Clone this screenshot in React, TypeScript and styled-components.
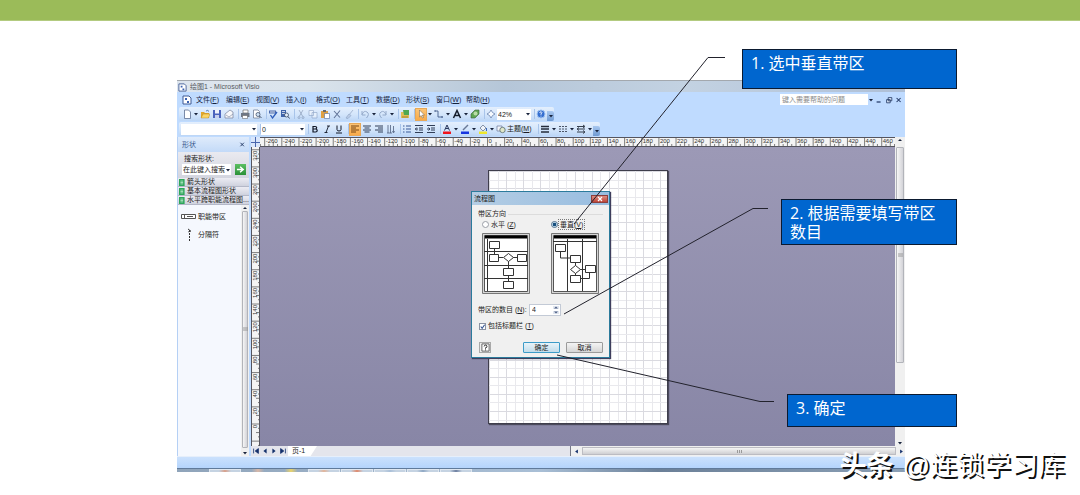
import React from "react";
import styled, { createGlobalStyle, css } from "styled-components";

const GlobalStyle = createGlobalStyle`
  *, *::before, *::after { box-sizing: border-box; }
  body {
    margin: 0;
    background: #fff;
    color: #1c1c22;
    font-family: "Liberation Sans", "Noto Sans CJK SC", sans-serif;
    font-size: 7px;
    line-height: 10px;
  }
  button, input, select { font: inherit; color: inherit; margin: 0; padding: 0; border: 0; background: none; border-radius: 0; }
  svg { display: block; flex: none; }
`;

/* ---------- slide ---------- */

const Slide = styled.main`
  position: relative;
  min-height: 100vh;
  overflow: hidden;
`;

const Banner = styled.div`
  height: 21px;
  background: #9bbb59;
  border-bottom: 1px solid #b3cb80;
`;

const AppWindow = styled.section`
  position: relative;
  margin: 59px 175px 0 177px;
  background: #bfdbff;
`;

const TitleBar = styled.header`
  display: flex;
  align-items: center;
  gap: 3px;
  height: 12px;
  padding: 1px 2px 0 1px;
  border-top: 1px solid #a3a8ae;
  background: linear-gradient(90deg, #dde5ee 0, #dbe4ec 18%, #b5c6d8 45%, #c3d2e2 70%, #aebfd6 100%);
  color: #55585f;
  h1 { margin: 0; font: inherit; }
`;

const MenuBar = styled.nav`
  display: flex;
  align-items: center;
  height: 15px;
  padding: 0 1px 0 5px;
`;

const MenuList = styled.div`
  display: flex;
  gap: 8px;
  margin-left: 4px;
  flex: 1;
  white-space: nowrap;
`;

const MenuItem = styled.button`
  width: 22px;
  line-height: 10px;
  white-space: nowrap;
  text-align: left;
  color: #15223c;
`;

const HelpSearch = styled.input`
  width: 88px;
  height: 11px;
  padding: 0 2px;
  background: #fff;
  &::placeholder { color: #8b8b8b; opacity: 1; }
`;

const WindowButtons = styled.div`
  display: flex;
  align-items: center;
`;

const WindowButton = styled.button`
  width: 10px;
  height: 10px;
  display: grid;
  place-items: center;
`;

const ToolRow = styled.div`
  display: flex;
  height: 15px;
  padding-left: 2px;
`;

const Toolbar = styled.div`
  display: flex;
  align-items: center;
  height: 14px;
  padding-left: 2px;
  border-radius: 2px;
  background: linear-gradient(#e4effd, #d3e5fb 55%, #bcd6f6);
`;

const ToolButton = styled.button<{ $active?: boolean; $dim?: boolean }>`
  display: grid;
  place-items: center;
  width: 12px;
  height: 13px;
  ${(p) => p.$active && css`background: linear-gradient(#fbc67a, #f8a845); outline: 1px solid #e8a857; outline-offset: -1px;`}
  svg { opacity: ${(p) => (p.$dim ? 0.45 : 1)}; }
`;

const CaretButton = styled.button`
  display: grid;
  place-items: center;
  width: 6px;
  height: 13px;
`;

const Divider = styled.span`
  width: 4px;
  height: 10px;
  border-right: 1px solid #a8c4ea;
`;

const Overflow = styled.button`
  align-self: flex-end;
  display: grid;
  place-items: center;
  width: 7px;
  height: 10px;
  border-radius: 0 2px 2px 0;
  background: linear-gradient(#a9c8f0, #6f9ad2);
`;

const Combo = styled.label<{ $w: number }>`
  display: flex;
  align-items: center;
  width: ${(p) => p.$w}px;
  height: 11px;
  background: #fff;
  select, input { flex: 1; min-width: 0; height: 11px; padding-left: 1px; appearance: none; outline: none; line-height: 11px; }
`;

const ThemeButton = styled.button`
  display: flex;
  align-items: center;
  width: 40px;
  white-space: nowrap;
  gap: 1px;
  padding-left: 1px;
`;

/* ---------- shapes panel ---------- */

const Body = styled.div`
  display: flex;
`;

const SidePanel = styled.aside`
  display: flex;
  flex-direction: column;
  width: 72px;
  margin-right: 2px;
  border-left: 1px solid #b5d0f5;
  background: #f5f8fe;
`;

const PanelHeader = styled.div`
  display: flex;
  justify-content: space-between;
  align-items: center;
  height: 15px;
  padding: 0 3px 0 4px;
  background: linear-gradient(#dfebfb, #c3daf8);
  color: #38568c;
  h2 { margin: 0; font: inherit; }
`;

const SearchBox = styled.div`
  height: 26px;
  padding: 2px 3px 0 4px;
  background: linear-gradient(#eaeaf0, #d3d5df);
`;

const SearchLabel = styled.label`
  display: block;
  padding-left: 2px;
  height: 10px;
`;

const SearchRow = styled.div`
  display: flex;
  justify-content: space-between;
`;

const GoButton = styled.button`
  display: grid;
  place-items: center;
  width: 11px;
  height: 11px;
  background: linear-gradient(#5cbf62, #2a9037);
`;

const Stencil = styled.button`
  display: flex;
  align-items: center;
  gap: 1px;
  height: 9px;
  padding-left: 1px;
  border-bottom: 1px solid #b4b8c8;
  background: linear-gradient(#ececf3, #cfd2de);
  white-space: nowrap;
`;

const ShapesArea = styled.div`
  display: flex;
  flex: 1;
`;

const ShapeList = styled.ul`
  flex: 1;
  margin: 0;
  padding: 6px 0 0 3px;
  list-style: none;
`;

const ShapeItem = styled.li`
  display: flex;
  align-items: center;
  gap: 2px;
  height: 18px;
  padding-bottom: 6px;
  white-space: nowrap;
  svg { overflow: visible; }
`;

const ScrollTrack = styled.div<{ $w: number }>`
  display: flex;
  flex-direction: column;
  align-items: center;
  width: ${(p) => p.$w}px;
  background: #f0f0f0;
`;

const ScrollThumb = styled.div<{ $end: number }>`
  flex: 1;
  display: grid;
  place-items: center;
  align-self: stretch;
  margin: 0 1px ${(p) => p.$end}px;
  border: 1px solid #b2b4ba;
  border-radius: 1px;
  background: linear-gradient(90deg, #f6f6f6, #d3d3d8);
`;

/* ---------- drawing area ---------- */

const Workspace = styled.div`
  flex: 1;
  min-width: 0;
  display: grid;
  grid-template-columns: 9px 1fr 10px;
  grid-template-rows: 10px auto 10px;
`;

const RulerStrip = styled.div`
  overflow: hidden;
  min-width: 0;
  min-height: 0;
  background: #f4f4f4;
`;

const Canvas = styled.div`
  display: flex;
  justify-content: center;
  padding: 23px 0 22px;
  background: linear-gradient(#9c99b6, #8886a6);
`;

const Paper = styled.div`
  width: 180px;
  height: 254px;
  background: #fff;
  border: 1px solid #3f3e4c;
  box-shadow: 1px 1px 1px #4b4a5c;
  overflow: hidden;
`;

const SheetBar = styled.div`
  grid-column: 1 / -1;
  display: flex;
  align-items: center;
  background: #e4e5ec;
`;

const NavButton = styled.button`
  width: 9px;
  height: 10px;
  display: grid;
  place-items: center;
`;

const SheetTab = styled.button`
  width: 29px;
  height: 10px;
  margin-left: 1px;
  padding-left: 4px;
  text-align: left;
  background: #fff;
  clip-path: polygon(0 0, 100% 0, 78% 100%, 0 100%);
`;

const SheetGap = styled.div`
  flex: 1;
  height: 10px;
  border-right: 1px solid #777a88;
`;

const HorizontalScroll = styled.div`
  display: flex;
  align-items: center;
  width: 51%;
  height: 10px;
  padding-left: 2px;
  background: #f0f0f0;
`;

const HorizontalThumb = styled.div`
  flex: 1;
  display: grid;
  place-items: center;
  height: 8px;
  margin: 0 2px;
  border: 1px solid #bcbcc2;
  background: linear-gradient(#f5f5f5, #cfcfd2);
`;

const StatusBar = styled.footer`
  height: 12px;
  border-top: 1px solid #e6effb;
  background: linear-gradient(#cbe1fd, #b4d4fc);
`;

const TaskBar = styled.div`
  display: flex;
  gap: 1px;
  height: 4px;
  padding-left: 32px;
  border-top: 1px solid #607a9a;
  background: linear-gradient(90deg, #8fa4ba, #a9bfd6 50%, #6b8098 66%, #8ba0b6 100%);
`;

const Task = styled.span<{ $tone: string; $plain?: boolean }>`
  width: 32px;
  border: ${(p) => (p.$plain ? "0" : "1px solid #dfe7f0")};
  border-bottom: 0;
  background: linear-gradient(90deg, transparent 30%, ${(p) => p.$tone} 50%, transparent 70%), ${(p) => (p.$plain ? "none" : "#c5d3e2")};
`;

/* ---------- dialog ---------- */

const Dialog = styled.div`
  position: absolute;
  top: 111px;
  left: 50%;
  width: 139px;
  margin-left: -70px;
  border: 1px solid #2b7b9c;
  background: #f0f0f0;
  box-shadow: 1px 1px 1px #3f3e5c;
`;

const DialogTitle = styled.div`
  display: flex;
  justify-content: space-between;
  align-items: center;
  height: 13px;
  padding: 0 1px 0 2px;
  background: linear-gradient(90deg, #b4cde4, #98bde0);
  h2 { margin: 0; font: inherit; }
`;

const CloseButton = styled.button`
  display: grid;
  place-items: center;
  width: 17px;
  height: 8px;
  border: 1px solid #8c3f3c;
  background: linear-gradient(#dd8c81, #bd4538);
`;

const DialogBody = styled.form`
  display: flex;
  flex-direction: column;
  height: 152px;
  padding: 4px 6px 0;
`;

const Group = styled.fieldset`
  margin: 0;
  padding: 0;
  border: 0;
  min-width: 0;
`;

const Legend = styled.legend`
  display: flex;
  align-items: center;
  gap: 2px;
  width: 100%;
  padding: 0;
  &::after { content: ""; flex: 1; height: 1px; background: #dcdcdc; }
`;

const Choices = styled.div`
  display: grid;
  grid-template-columns: 69px auto;
  padding-left: 4px;
`;

const ChoiceLabel = styled.label<{ $focus?: boolean }>`
  display: flex;
  align-items: center;
  gap: 1px;
  height: 11px;
  margin-bottom: 3px;
  white-space: nowrap;
  span { outline: ${(p) => (p.$focus ? "1px dotted #777" : "0")}; padding: 0 1px; line-height: 9px; }
`;

const Radio = styled.input`
  appearance: none;
  width: 7px;
  height: 7px;
  border: 1px solid #9a9ea6;
  border-radius: 50%;
  background: #fff;
  &:checked { border-color: #51708c; background: radial-gradient(#174f7e 45%, #d5ebf7 60%); }
`;

const TickBox = styled.span`
  display: grid;
  width: 7px;
  height: 7px;
  input { grid-area: 1 / 1; appearance: none; width: 7px; height: 7px; border: 1px solid #8b93a3; background: #fff; }
  svg { grid-area: 1 / 1; visibility: hidden; pointer-events: none; z-index: 1; }
  input:checked + svg { visibility: visible; }
`;

const CountRow = styled.div`
  display: flex;
  align-items: center;
  height: 12px;
  margin-top: 10px;
  label { width: 51px; white-space: nowrap; }
`;

const Spinner = styled.div`
  display: flex;
  width: 32px;
  height: 12px;
  border: 1px solid #c3cad6;
  background: #fff;
  input { width: 22px; padding-left: 2px; }
`;

const SpinButtons = styled.div`
  display: grid;
  flex: 1;
  button { display: grid; place-items: center; background: #dfe5ef; outline: 1px solid #fff; outline-offset: -1px; }
`;

const TickLabel = styled.label`
  display: flex;
  align-items: center;
  gap: 2px;
  height: 10px;
  margin-top: 5px;
  padding-left: 1px;
`;

const DialogButtons = styled.div`
  display: flex;
  gap: 6px;
  margin-top: 11px;
`;

const HelpButton = styled.button`
  display: grid;
  place-items: center;
  width: 12px;
  height: 11px;
  margin: 0 auto 0 1px;
  border: 1px solid #a9a9a9;
  background: #eee;
`;

const PushButton = styled.button<{ $primary?: boolean }>`
  width: 37px;
  height: 11px;
  border: 1px solid ${(p) => (p.$primary ? "#3c9bc8" : "#9b9b9b")};
  border-radius: 1px;
  background: ${(p) => (p.$primary ? "linear-gradient(#e8f3f9, #c2dcea)" : "linear-gradient(#f4f4f4, #d6d6d6)")};
  line-height: 9px;
`;

/* ---------- annotations ---------- */

const Leaders = styled.svg`
  position: absolute;
  top: 0;
  left: 50%;
  overflow: visible;
  pointer-events: none;
`;

const Callout = styled.p<{ $top: number; $w: number; $h: number }>`
  position: absolute;
  top: ${(p) => p.$top}px;
  left: calc(50% + ${(p) => 417 - p.$w}px);
  width: ${(p) => p.$w}px;
  min-height: ${(p) => p.$h}px;
  margin: 0;
  padding: 4px 8px 2px;
  border: 1px solid #0b1a30;
  background: #0066cf;
  color: #fff;
  font: 400 16px/19px "Open Sans", "Noto Sans CJK SC", sans-serif;
`;

const Watermark = styled.p`
  position: absolute;
  top: 448px;
  right: 15px;
  display: flex;
  gap: 9px;
  margin: 0;
  color: #fff;
  font: 400 27px/36px "Liberation Sans", "Noto Sans CJK SC", sans-serif;
  text-shadow: 2px 2px 0 #111;
  white-space: nowrap;
  strong { font-weight: 700; }
`;

/* ---------- icons ---------- */

const art: Record<string, React.ReactNode> = {
  visio: <><path d="M1 1h6l2 2v6H1z" fill="#fff" stroke="#3f5b95" /><path d="M3 3h2v2H3zM5 6h2v2H5z" fill="#3b61b0" /></>,
  fresh: <path d="M2.500 1h4l2 2v6.500h-6z" fill="#fff" stroke="#5d6f92" strokeWidth=".8" />,
  open: <><path d="M1 3h3l1 1h4v5H1z" fill="#e2a72d" /><path d="M1 9l2-4h7L8.500 9z" fill="#fbd568" stroke="#a97715" strokeWidth=".4" /><path d="M6 2q2-1.500 3 .5" stroke="#3764ad" fill="none" strokeWidth=".8" /></>,
  save: <><path d="M1 1h8v8H1z" fill="#4a63bd" /><path d="M3 1h4v3.500H3z" fill="#eef2fb" /><path d="M3 6h4v3H3z" fill="#c7d0ec" /></>,
  mail: <><path d="M1 5l5-4 3 2v6H1z" fill="#f8f8fa" stroke="#74809b" strokeWidth=".7" /><path d="M2 6l3 2 4-3" stroke="#74809b" fill="none" strokeWidth=".6" /></>,
  print: <><path d="M3 1h5v3H3z" fill="#fff" stroke="#555" strokeWidth=".6" /><path d="M1 4h8.500v4H1z" fill="#6d7684" /><path d="M2.500 6.500h5V9.500h-5z" fill="#fff" stroke="#555" strokeWidth=".5" /></>,
  preview: <><path d="M1.500 1H6l1.500 1.500V9h-6z" fill="#fff" stroke="#66738b" strokeWidth=".7" /><circle cx="6" cy="5.500" r="2" fill="#cfe2f5" stroke="#47566f" strokeWidth=".8" /><path d="M7.500 7L9.500 9" stroke="#47566f" /></>,
  spell: <><path d="M1 1.500h7v3H1z" fill="#4c6bab" /><path d="M2 3h5" stroke="#fff" strokeWidth=".8" /><path d="M2.500 6l2 3L9 3" stroke="#2f5dba" fill="none" strokeWidth="1.300" /></>,
  research: <><path d="M1 1h5v7H1z" fill="#3f63a9" /><path d="M2 2.500h3M2 4.500h3" stroke="#fff" strokeWidth=".7" /><circle cx="6.500" cy="6" r="2" fill="#e4effb" stroke="#3e4c66" strokeWidth=".8" /><path d="M8 7.500l1.500 2" stroke="#3e4c66" /></>,
  cut: <path d="M3 1l3.500 6M7 1L3.500 7M2 8.500a1 1 0 1 0 2 0 1 1 0 1 0-2 0M6 8.500a1 1 0 1 0 2 0 1 1 0 1 0-2 0" stroke="#45577a" fill="none" strokeWidth=".8" />,
  copy: <path d="M1 1.500h4.500v5H1zM4 3.500h5v5.500H4z" fill="#fff" stroke="#4b6695" strokeWidth=".7" />,
  paste: <><path d="M1 2h7v7H1z" fill="#dfa042" /><path d="M3 1h3v2H3z" fill="#66696f" /><path d="M4.500 4.500h5v5h-5z" fill="#fff" stroke="#536ba0" strokeWidth=".6" /></>,
  erase: <path d="M2 2l6 6.500M8 1.500L2 9" stroke="#63769a" fill="none" strokeWidth="1.100" />,
  brush: <path d="M9 1L5 6M5 5l2 1.500-3 3-2-.5z" stroke="#6b7fa5" fill="#a7b5d0" />,
  undo: <path d="M2 5.500Q4 1 7 3t-.5 6M2 2v4h3.500" stroke="#47618f" fill="none" />,
  redo: <path d="M8 5.500Q6 1 3 3t.5 6M8 2v4H4.500" stroke="#47618f" fill="none" />,
  shapes: <><path d="M1 3h8v6H1z" fill="#e0bd55" /><path d="M3 1h6v5H4z" fill="#4da852" /><path d="M2 8h6" stroke="#8a6a17" strokeWidth=".7" /></>,
  pointer: <path d="M3.500 1v7l1.700-1.500L6.500 9l1-.5-1.200-2.400H8.500z" fill="#fff" stroke="#665b4e" strokeWidth=".5" />,
  connector: <path d="M1 2h3v6h5M1 1v2M8 7v2" stroke="#465e8b" fill="none" strokeWidth=".9" />,
  letter: <path d="M1.500 9L5 1.500 8.500 9M3 6.500h4" stroke="#151c2b" fill="none" strokeWidth="1.500" />,
  stamp: <><path d="M1 5l4-4h4v4L5 9H1z" fill="#5fa654" stroke="#3a5e3c" strokeWidth=".6" /><circle cx="5.500" cy="4.500" r="2" fill="#b9dba7" /></>,
  pan: <path d="M5 1l1.500 2.500L9 5 6.500 6.500 5 9 3.500 6.500 1 5l2.500-1.500z" fill="#f6faff" stroke="#6a83ad" strokeWidth=".8" />,
  help: <><circle cx="5" cy="5" r="4" fill="#356fd0" stroke="#9fc3f3" /><path d="M3.700 4Q4 2.500 5.300 2.800T5 5v.8M5 6.700v.8" stroke="#fff" fill="none" strokeWidth=".9" /></>,
  bold: <path d="M3 2.500v5.500h2.500q1.700 0 1.700-1.500T5.500 5H3h2.200q1.500 0 1.500-1.200T5.200 2.500z" stroke="#101626" fill="none" strokeWidth="1.200" />,
  italic: <path d="M6.500 2L4 8.500M5 2h3M2.500 8.500h3" stroke="#101626" fill="none" strokeWidth=".9" />,
  underline: <path d="M3 1.500v4q0 1.500 2 1.500t2-1.500v-4M2 9h6" stroke="#101626" fill="none" />,
  left: <path d="M1 2h8M1 4h5M1 6h8M1 8h5" stroke="#7b4713" />,
  center: <path d="M1 2h8M2.500 4h5M1 6h8M2.500 8h5" stroke="#313e58" />,
  right: <path d="M1 2h8M4 4h5M1 6h8M4 8h5" stroke="#313e58" />,
  vertical: <path d="M2 1v8M4.500 1v8M7.500 2v6M6.500 7l1 2 1-2M1 9h5" stroke="#51617f" fill="none" strokeWidth=".8" />,
  bullets: <path d="M1 2h1.500M1 5h1.500M1 8h1.500M4 2h5M4 5h5M4 8h5" stroke="#3a5b98" />,
  outdent: <path d="M1 1.500h8M5 4h4M5 6h4M1 8.500h8M4 5H1.500M2.800 3.500L1.300 5l1.500 1.500" stroke="#313e58" fill="none" />,
  indent: <path d="M1 1.500h8M5 4h4M5 6h4M1 8.500h8M1 5h3M2.500 3.500L4 5 2.500 6.500" stroke="#313e58" fill="none" />,
  fontColor: <><path d="M2.500 6.500L5 1l2.500 5.500M3.500 4.500h3" stroke="#26345a" fill="none" /><path d="M1 7.500h8v2.500H1z" fill="#f0141e" /></>,
  lineColor: <><path d="M3 6l5-5" stroke="#697996" strokeWidth="1.400" /><path d="M1 7.500h8v2.500H1z" fill="#1635e0" /></>,
  fillColor: <><path d="M2 4l3-3 3 3-3 3z" fill="#eef3fa" stroke="#5d6c84" strokeWidth=".7" /><path d="M8.500 4v3" stroke="#3a69b8" /><path d="M1 7.500h8v2.500H1z" fill="#efe72c" /></>,
  theme: <><path d="M1 2h5v5H1z" fill="#f3f5fa" stroke="#68779a" strokeWidth=".7" /><circle cx="6.500" cy="6" r="2.700" fill="#dfe7c9" stroke="#596d70" strokeWidth=".8" /></>,
  weight: <path d="M1 2.500h8M1 5h8M1 8h8" stroke="#252c3b" strokeWidth="1.700" />,
  dashes: <path d="M1 2.500h8M1 5h8M1 7.500h8" stroke="#4c5669" strokeDasharray="2 1" />,
  ends: <path d="M1 2.500h7M2 5h7M1 8h7M7 1l2 1.500L7 4M3 3.500L1 5l2 1.500M7 6.500L9 8 7 9.500" stroke="#252c3b" fill="none" strokeWidth=".9" />,
  go: <path d="M1 5h6M4.500 2L8 5 4.500 8" stroke="#fff" fill="none" strokeWidth="1.600" />,
  stencil: <><path d="M0 0h8v10H0z" fill="#2ea65a" /><path d="M2 3h4M2 5h4M2 7h4" stroke="#d2f3dc" /></>,
  cross: <path d="M2 2.500l5 5M7 2.500l-5 5" stroke="#1e3360" strokeWidth="1.300" />,
  minus: <path d="M2 7.500h5" stroke="#1e3360" strokeWidth="1.500" />,
  restore: <path d="M4 2h4.500v4H4zM2 4.500h4.500v4H2z" fill="#dce9fb" stroke="#1e3360" />,
  question: <><path d="M1 1h8v8H1z" fill="#fff" stroke="#333" strokeWidth=".8" /><path d="M3.500 3.800q.2-1.500 1.600-1.500T6.600 3.800 5 5.300v1M5 7.200v1" stroke="#111" fill="none" /></>,
  tick: <path d="M2.500 5l2 2.500L8 2.500" stroke="#33528f" fill="none" strokeWidth="1.500" />,
  first: <path d="M2 2v6M8 2L4 5l4 3z" stroke="#14306b" fill="#14306b" />,
  prev: <path d="M7 2L3 5l4 3z" fill="#14306b" />,
  next: <path d="M3 2l4 3-4 3z" fill="#14306b" />,
  last: <path d="M8 2v6M2 2l4 3-4 3z" stroke="#14306b" fill="#14306b" />,
};

const Icon = ({ name, size = 9 }: { name: string; size?: number }) => (
  <svg width={size} height={size} viewBox="0 0 10 10" aria-hidden="true">{art[name]}</svg>
);

const Caret = ({ up = false }: { up?: boolean }) => (
  <svg width="6" height="6" viewBox="0 0 6 6" aria-hidden="true">
    <path d={up ? "M1 4h4L3 2z" : "M1 2h4L3 4.500z"} fill="#18233c" />
  </svg>
);

const Grip = ({ vertical = false }: { vertical?: boolean }) => (
  <svg width="5" height="5" viewBox="0 0 5 5" aria-hidden="true">
    <path d={vertical ? "M0 1h5M0 3h5" : "M.5 1v3M2.500 1v3M4.500 1v3"} stroke="#888" strokeWidth=".8" />
  </svg>
);

const Key = ({ text, k }: { text: string; k: string }) => <>{text}(<u>{k}</u>)</>;

/* ---------- toolbars ---------- */

const dimmed = new Set(["cut", "copy", "brush", "undo", "redo"]);
const pressed = new Set(["pointer", "left"]);

/* "|" is a divider and "v" a drop-down arrow; everything else is an icon name. */
const Tools = ({ items }: { items: string }) => (
  <>
    {items.split(" ").map((item, i) => {
      if (item === "|") return <Divider key={i} />;
      if (item === "v") return <CaretButton key={i} type="button" aria-label="更多选项"><Caret /></CaretButton>;
      return (
        <ToolButton key={i} type="button" aria-label={item} $active={pressed.has(item)} $dim={dimmed.has(item)}>
          <Icon name={item} size={10} />
        </ToolButton>
      );
    })}
  </>
);

const menus: [string, string][] = [
  ["文件", "F"], ["编辑", "E"], ["视图", "V"], ["插入", "I"], ["格式", "O"],
  ["工具", "T"], ["数据", "D"], ["形状", "S"], ["窗口", "W"], ["帮助", "H"],
];

/* ---------- rulers and grid ---------- */

const MM = 0.857;

const HorizontalRuler = () => (
  <svg width="100%" height="10" aria-hidden="true">
    <svg x="50%" overflow="visible">
      {Array.from({ length: 181 }, (_, i) => {
        const value = (i - 80) * 5;
        const x = value * MM - 90;
        const major = value % 20 === 0;
        return (
          <g key={i}>
            <path d={`M${x} ${major ? 1 : value % 10 === 0 ? 5 : 7}V10`} stroke="#4a4a4a" strokeWidth=".7" />
            {major && value >= -260 && value <= 460 && <text x={x + 1} y="6" fontSize="6" fill="#333">{value}</text>}
          </g>
        );
      })}
      <path d="M-900 9.500H900M-900 .5H900" stroke="#55555f" />
    </svg>
  </svg>
);

const VerticalRuler = () => (
  <svg width="9" height="299" aria-hidden="true">
    {Array.from({ length: 73 }, (_, i) => {
      const value = (i - 6) * 5;
      const y = 277 - value * MM;
      const major = value % 20 === 0;
      return (
        <g key={i}>
          <path d={`M${major ? 1 : value % 10 === 0 ? 5 : 7} ${y}H9`} stroke="#4a4a4a" strokeWidth=".7" />
          {major && value >= 0 && <text transform={`translate(6 ${y + 1}) rotate(-90)`} fontSize="6" textAnchor="end" fill="#333">{value}</text>}
        </g>
      );
    })}
    <path d="M8.500 0V299M.5 0V299" stroke="#55555f" />
  </svg>
);

const GridLines = () => (
  <svg width="180" height="254" aria-hidden="true">
    {Array.from({ length: 31 }, (_, i) => {
      const at = Math.round(i * MM * 10) + 0.5;
      return <path key={i} d={`M${at} 0V254M0 ${at}H180`} stroke={i % 2 ? "#e9e9ed" : "#dadae0"} />;
    })}
  </svg>
);

/* ---------- lane previews ---------- */

const HorizontalLanes = () => (
  <svg width="48" height="61" viewBox="0 0 48 61" aria-hidden="true" fill="none" stroke="#333">
    <path d="M.5.5h47v60H.5z" fill="#d6d6d6" stroke="#777" />
    <path d="M2.500 2.500h43v56h-43z" fill="#fff" stroke="#555" />
    <path d="M3 4h42" stroke="#000" strokeWidth="3" />
    <path d="M5.500 6v52M2 18.500h44M2 32.500h44M2 45.500h44M12.500 15v6M17 24.500h4M31 24.500h4M26.500 28v20" />
    <path d="M7.500 8.500h10v7h-10zM7.500 21.500h9v7h-9zM35.500 21.500h9v7h-9zM21.500 35.500h10v7h-10zM21.500 48.500h10v7h-10zM21.500 24.500l5-4 5 4-5 4z" fill="#fff" />
  </svg>
);

const VerticalLanes = () => (
  <svg width="48" height="61" viewBox="0 0 48 61" aria-hidden="true" fill="none" stroke="#333">
    <path d="M.5.5h47v60H.5z" fill="#d6d6d6" stroke="#777" />
    <path d="M2.500 2.500h43v56h-43z" fill="#fff" stroke="#555" />
    <path d="M3 4h42" stroke="#000" strokeWidth="3" />
    <path d="M2 8.500h44M16.500 6v52M31.500 6v52M9.500 18v7h10M24.500 29v13M29 36.500h6M29 45.500h9.500V39" />
    <path d="M4.500 11.500h10v7h-10zM19.500 22.500h10v7h-10zM19.500 42.500h10v7h-10zM34.500 32.500h10v7h-10zM19.500 36.500l5-4 5 4-5 4z" fill="#fff" />
  </svg>
);

const LaneDialog = () => (
  <Dialog role="dialog" aria-labelledby="lane-title">
    <DialogTitle>
      <h2 id="lane-title">流程图</h2>
      <CloseButton type="button" aria-label="关闭">
        <svg width="6" height="6" viewBox="0 0 6 6"><path d="M1 1l4 4M5 1L1 5" stroke="#fff" strokeWidth="1.200" /></svg>
      </CloseButton>
    </DialogTitle>
    <DialogBody onSubmit={(e) => e.preventDefault()}>
      <Group>
        <Legend>带区方向</Legend>
        <Choices>
          <div>
            <ChoiceLabel><Radio type="radio" name="direction" /><span><Key text="水平 " k="Z" /></span></ChoiceLabel>
            <HorizontalLanes />
          </div>
          <div>
            <ChoiceLabel $focus><Radio type="radio" name="direction" defaultChecked /><span><Key text="垂直" k="V" /></span></ChoiceLabel>
            <VerticalLanes />
          </div>
        </Choices>
      </Group>
      <CountRow>
        <label htmlFor="lane-count"><Key text="带区的数目 " k="N" />:</label>
        <Spinner>
          <input id="lane-count" defaultValue="4" />
          <SpinButtons>
            <button type="button" aria-label="增加"><svg width="4" height="3"><path d="M0 2.500h4L2 .5z" fill="#4b5d83" /></svg></button>
            <button type="button" aria-label="减少"><svg width="4" height="3"><path d="M0 .5h4L2 2.500z" fill="#4b5d83" /></svg></button>
          </SpinButtons>
        </Spinner>
      </CountRow>
      <TickLabel>
        <TickBox><input type="checkbox" defaultChecked /><Icon name="tick" size={7} /></TickBox>
        <span><Key text="包括标题栏 " k="T" /></span>
      </TickLabel>
      <DialogButtons>
        <HelpButton type="button" aria-label="帮助"><Icon name="question" size={9} /></HelpButton>
        <PushButton $primary>确定</PushButton>
        <PushButton type="button">取消</PushButton>
      </DialogButtons>
    </DialogBody>
  </Dialog>
);

const ShapesPanel = () => (
  <SidePanel>
    <PanelHeader>
      <h2>形状</h2>
      <button type="button" aria-label="关闭形状"><Icon name="cross" size={7} /></button>
    </PanelHeader>
    <SearchBox>
      <SearchLabel htmlFor="shape-search">搜索形状:</SearchLabel>
      <SearchRow>
        <Combo $w={49}>
          <input id="shape-search" defaultValue="在此键入搜索" />
          <Caret />
        </Combo>
        <GoButton type="button" aria-label="搜索"><Icon name="go" /></GoButton>
      </SearchRow>
    </SearchBox>
    {["箭头形状", "基本流程图形状", "水平跨职能流程图..."].map((name) => (
      <Stencil key={name} type="button"><Icon name="stencil" size={7} />{name}</Stencil>
    ))}
    <ShapesArea>
      <ShapeList>
        <ShapeItem>
          <svg width="15" height="6" aria-hidden="true"><path d="M.5.5h14v4H.5zM3.500.5v4M6 2.500h6" fill="#fff" stroke="#555" /></svg>
          职能带区
        </ShapeItem>
        <ShapeItem>
          <svg width="15" height="12" aria-hidden="true"><path d="M8.500 1v12M7 0l3 2-3 1" fill="none" stroke="#333" strokeDasharray="2 1" /></svg>
          分隔符
        </ShapeItem>
      </ShapeList>
      <ScrollTrack $w={8}>
        <Caret up />
        <ScrollThumb $end={2}><Grip vertical /></ScrollThumb>
        <Caret />
      </ScrollTrack>
    </ShapesArea>
  </SidePanel>
);

export default function App() {
  return (
    <>
      <GlobalStyle />
      <Slide>
        <Banner />
        <AppWindow>
          <TitleBar>
            <Icon name="visio" />
            <h1>绘图1 - Microsoft Visio</h1>
          </TitleBar>
          <MenuBar>
            <Icon name="visio" size={10} />
            <MenuList>
              {menus.map(([text, k]) => <MenuItem key={text} type="button"><Key text={text} k={k} /></MenuItem>)}
            </MenuList>
            <HelpSearch aria-label="帮助搜索" placeholder="键入需要帮助的问题" />
            <CaretButton type="button" aria-label="最近的问题"><Caret /></CaretButton>
            <WindowButtons>
              {["minus", "restore", "cross"].map((n) => (
                <WindowButton key={n} type="button" aria-label={n}><Icon name={n} size={8} /></WindowButton>
              ))}
            </WindowButtons>
          </MenuBar>
          <ToolRow>
            <Toolbar>
              <Tools items="fresh v open save mail | print preview | spell research | cut copy paste erase brush | undo v redo v | shapes | pointer v connector v letter v stamp | pan" />
              <Combo $w={34}>
                <select aria-label="显示比例"><option>42%</option></select>
                <Caret />
              </Combo>
              <Tools items="| help" />
              <Overflow type="button" aria-label="工具栏选项"><Caret /></Overflow>
            </Toolbar>
          </ToolRow>
          <ToolRow>
            <Toolbar>
              <Combo $w={76}>
                <select aria-label="字体"><option></option></select>
                <Caret />
              </Combo>
              <Divider />
              <Combo $w={44}>
                <select aria-label="字号"><option>0</option></select>
                <Caret />
              </Combo>
              <Tools items="| bold italic underline | left center right vertical | bullets outdent indent | fontColor v lineColor v fillColor v" />
              <ThemeButton type="button"><Icon name="theme" size={10} /><span><Key text="主题" k="M" /></span></ThemeButton>
              <Tools items="| weight v dashes v ends v" />
              <Overflow type="button" aria-label="工具栏选项"><Caret /></Overflow>
            </Toolbar>
          </ToolRow>
          <Body>
            <ShapesPanel />
            <Workspace>
              <RulerStrip>
                <svg width="9" height="10" aria-hidden="true"><path d="M0 0h9v10H0z" fill="#d9e6fb" /><path d="M4.500 0v10M0 5.500h9" stroke="#4967ae" /></svg>
              </RulerStrip>
              <RulerStrip><HorizontalRuler /></RulerStrip>
              <ScrollTrack $w={10}><Caret up /></ScrollTrack>
              <RulerStrip><VerticalRuler /></RulerStrip>
              <Canvas><Paper><GridLines /></Paper></Canvas>
              <ScrollTrack $w={10}>
                <ScrollThumb $end={77}><Grip vertical /></ScrollThumb>
                <Caret />
              </ScrollTrack>
              <SheetBar>
                {["first", "prev", "next", "last"].map((n) => (
                  <NavButton key={n} type="button" aria-label={n}><Icon name={n} size={8} /></NavButton>
                ))}
                <SheetTab type="button">页-1</SheetTab>
                <SheetGap />
                <HorizontalScroll>
                  <Icon name="prev" size={7} />
                  <HorizontalThumb><Grip /></HorizontalThumb>
                  <Icon name="next" size={7} />
                </HorizontalScroll>
              </SheetBar>
            </Workspace>
          </Body>
          <StatusBar />
          <TaskBar>
            <Task $tone="#d9a08a" />
            <Task $tone="#d8b8a8" $plain />
            <Task $tone="#ead36a" $plain />
            <Task $tone="#e3b59a" />
            <Task $tone="#e08a6c" />
            <Task $tone="#a9bfd8" />
            <Task $tone="#8fa8c4" />
            <Task $tone="#6d7fa0" />
          </TaskBar>
          <LaneDialog />
        </AppWindow>
        <Leaders width="1" height="1" aria-hidden="true" fill="none" stroke="#22222c">
          <path d="M185 57.500H168L34 224M228 208.500H213L24 314M234 401.500H220L17 355" />
        </Leaders>
        <Callout $top={49} $w={215} $h={40}>1. 选中垂直带区</Callout>
        <Callout $top={199} $w={176} $h={46}>2. 根据需要填写带区数目</Callout>
        <Callout $top={394} $w={170} $h={33}>3. 确定</Callout>
        <Watermark><strong>头条</strong><span>@连锁学习库</span></Watermark>
      </Slide>
    </>
  );
}
